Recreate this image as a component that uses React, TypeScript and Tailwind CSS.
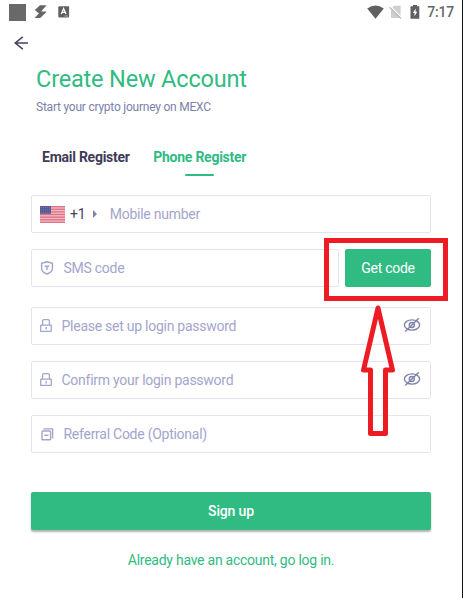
import React from "react";

const Shield = () => (
  <svg width="14" height="14" viewBox="0 0 14 14" fill="none" stroke="#a3a5cc" strokeWidth="1.4">
    <path d="M7 .8 12.4 2.2V7.6C12.4 10.4 10 12 7 13 4 12 1.6 10.4 1.6 7.6V2.2Z" strokeLinejoin="round" />
    <path d="M4.7 5.2H9.3M7 5.2V9" />
  </svg>
);

const Lock = () => (
  <svg width="12" height="14" viewBox="0 0 12 14" fill="none" stroke="#a3a5cc" strokeWidth="1.3">
    <path d="M2.6 6.2V2Q2.6 .7 4 .7H8Q9.4 .7 9.4 2V6.2" />
    <rect x=".7" y="6.2" width="10.6" height="6.2" rx=".4" />
    <path d="M6.2 8V10.6" strokeWidth="1.4" />
  </svg>
);

const Referral = () => (
  <svg width="13" height="13" viewBox="0 0 13 13" fill="none" stroke="#a3a5cc" strokeWidth="1.4">
    <path d="M2.2 .9H11.6V10.6" />
    <rect x="1" y="3" width="8.6" height="8.8" rx=".8" />
    <path d="M3.2 7.3H7.5" />
  </svg>
);

const EyeOff = () => (
  <svg className="relative -top-px" width="18" height="16" viewBox="0 0 18 16" fill="none" stroke="#8082ac" strokeWidth="1.4">
    <ellipse cx="9" cy="8" rx="7.6" ry="5.1" />
    <circle cx="8.8" cy="8" r="2.5" />
    <path d="M2.2 14.6 15.8 1.2" />
  </svg>
);

const Flag = () => (
  <svg width="25" height="17" viewBox="0 0 25 17">
    <rect width="25" height="17" fill="#efbcc6" />
    {[0, 1, 2, 3, 4, 5, 6].map((n) => (
      <rect key={n} y={n * 2.62} width="25" height="1.31" fill="#df7184" />
    ))}
    <rect width="11" height="7.8" fill="#585b92" />
    {[1.5, 3.8, 6.1].map((y) => (
      <path key={y} d={`M1 ${y}H10.5`} stroke="#8688b2" strokeWidth=".7" strokeDasharray=".9 1.2" />
    ))}
  </svg>
);

const field = "flex h-[38px] items-center rounded-[2px] border border-[#e2e4f6] text-sm tracking-[-0.26px] text-[#a3a5cc]";

export default function App() {
  return (
    <div className="relative h-[598px] w-[463px] overflow-hidden border-r border-[#11131c] bg-white font-['Roboto',sans-serif]">
      <header className="flex h-6 items-center pl-[9px] pr-[8px] text-[#666]">
        <div className="h-[17px] w-[17px] bg-[#696969]" />
        <svg className="ml-[8px]" width="14" height="14" viewBox="0 0 14 14" fill="#666">
          <path d="M6 .3H12.6L8.4 5.1H.8Z" />
          <path d="M.8 5.1H8.4L7.2 6.4H12.6L11.4 7.9H4.4Z" />
          <path d="M5.2 7.9H11.4L6.2 13H.6Z" />
        </svg>
        <svg className="ml-[10px]" width="12" height="12" viewBox="0 0 12 12">
          <rect x=".3" y=".3" width="10.8" height="11.2" rx="1" fill="#606060" />
          <path d="M3.3 8 5.6 2.6 8 8M4.2 6.3H7" fill="none" stroke="white" strokeWidth="1.3" />
          <path d="M6.5 10H10" stroke="#aaa" strokeWidth="1" />
        </svg>
        <div className="ml-auto flex items-center">
          <svg width="17" height="14" viewBox="0 0 17 14" fill="#606060">
            <path d="M.2 3.6Q8.5-2.6 16.8 3.6L8.5 13.7Z" />
          </svg>
          <svg className="ml-[5px]" width="14" height="14" viewBox="0 0 14 14">
            <path d="M5 .8H11.6V13H2V4Z" fill="#cecece" />
            <path d="M1.4 1.2 13 12.8" stroke="white" strokeWidth="1.2" />
            <path d="M.5 2.1 12 13.6" stroke="#b8b8b8" strokeWidth="1.2" />
          </svg>
          <svg className="ml-[7px]" width="10" height="14" viewBox="0 0 10 14">
            <path d="M3 0H7V1.3H9.3V13.7H.5V1.3H3Z" fill="#606060" />
            <path d="M5.6 3.5 2.9 8H4.5V11.3L7.2 6.8H5.6Z" fill="white" />
          </svg>
          <time className="ml-[7px] text-[14px] font-medium leading-6 tracking-[-0.2px]">7:17</time>
        </div>
      </header>

      <button className="ml-[14px] mt-[12px] block h-[14px] w-[15px]" aria-label="Back">
        <svg width="15" height="14" viewBox="0 0 15 14" fill="none" stroke="#45415e" strokeWidth="1.5">
          <path d="M8.8 .8 1.2 7 8.8 13.2M1.2 7H14" />
        </svg>
      </button>

      <div className="ml-[36px] mt-[13px]">
        <h1 className="whitespace-nowrap text-[23.5px] leading-8 tracking-[-0.17px] text-[#30bb83]">Create New Account</h1>
        <p className="mt-[4px] text-xs leading-4 tracking-[-0.23px] text-[#7d80aa]">Start your crypto journey on MEXC</p>
      </div>

      <nav className="ml-[42px] mt-[32px] flex h-[30px] gap-[23.5px] text-sm font-bold tracking-[-0.25px]">
        <span className="text-[#3e3b58]">Email Register</span>
        <span className="flex flex-col items-center text-[#30bb83]">
          Phone Register
          <i className="mt-[7px] h-[2px] w-[29px] rounded-full bg-[#30bb83]" />
        </span>
      </nav>

      <form className="ml-[31px] mt-[18px] w-[400px]">
        <div className={`${field} pl-[8px]`}>
          <Flag />
          <span className="ml-[5px] text-[#45415e]">+1</span>
          <i className="ml-[8px] h-0 w-0 border-y-[4px] border-l-[4px] border-y-transparent border-l-[#8082ac]" />
          <span className="ml-[12.5px]">Mobile number</span>
        </div>
        <div className="mt-[16px] flex gap-[6px]">
          <div className={`${field} flex-1 pl-[8px]`}>
            <Shield />
            <span className="ml-[9.5px]">SMS code</span>
          </div>
          <button type="button" className="h-[38px] w-[86px] rounded-[2px] bg-[#30bb83] text-sm tracking-[-0.26px] text-white">Get code</button>
        </div>
        <div className={`${field} mt-[20px] pl-[8px] pr-[9px]`}>
          <Lock />
          <span className="ml-[9.5px]">Please set up login password</span>
          <span className="ml-auto"><EyeOff /></span>
        </div>
        <div className={`${field} mt-[16px] pl-[8px] pr-[9px]`}>
          <Lock />
          <span className="ml-[9.5px]">Confirm your login password</span>
          <span className="ml-auto"><EyeOff /></span>
        </div>
        <div className={`${field} mt-[16px] pl-[9px]`}>
          <Referral />
          <span className="ml-[9.5px]">Referral Code (Optional)</span>
        </div>
        <button type="button" className="mt-[39px] block h-[38px] w-full rounded-[2px] bg-[#30bb83] text-sm font-medium tracking-[-0.15px] text-white shadow-[0_2px_2px_rgba(0,0,0,0.3)]">
          Sign up
        </button>
        <p className="mt-[20px] text-center text-sm tracking-[-0.25px] text-[#30bb83]">Already have an account, go log in.</p>
      </form>

      <div className="absolute left-[324px] top-[238px] h-[63px] w-[124px] border-[5px] border-[#ed1c24]" />
      <svg className="absolute left-[358px] top-[302px]" width="40" height="138" viewBox="358 302 40 138" fill="none" stroke="#ed1c24" strokeWidth="5" strokeLinejoin="round">
        <path d="M378 308 363.5 370H370.5V433.5H385.5V370H392.5Z" />
      </svg>
    </div>
  );
}
